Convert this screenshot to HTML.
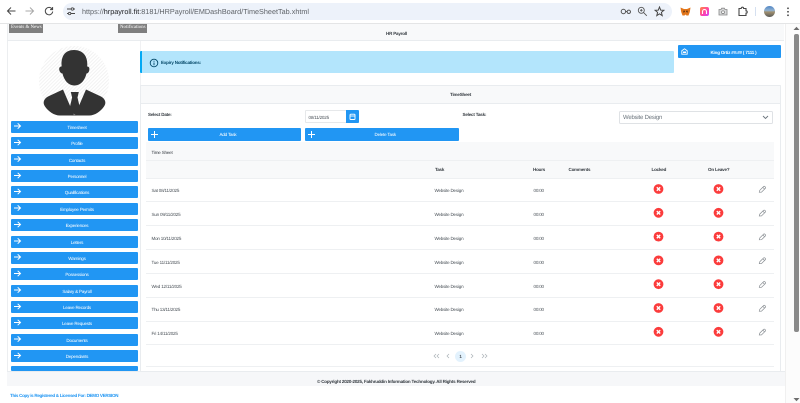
<!DOCTYPE html>
<html><head><meta charset="utf-8"><title>TimeSheet</title>
<style>
html,body{margin:0;padding:0;width:800px;height:403px;overflow:hidden;background:#fff;font-family:"Liberation Sans",sans-serif;text-rendering:geometricPrecision}
div,span,svg{position:absolute}
.t{white-space:nowrap;font-size:4.5px;letter-spacing:-.18px;line-height:6px;color:#495057}
.b{font-weight:bold}
.btn{background:#2196f3;border-radius:1px;color:#fff;font-size:4.5px;letter-spacing:-.18px;line-height:13px;text-align:center;white-space:nowrap}
.s{left:11px;width:127px;height:12px;padding-left:0;text-indent:5px}
.line{left:146px;width:628px;height:1px;background:#eef0f2}
.c{text-align:center}
</style></head><body>
<svg width="0" height="0" style="position:absolute"><defs>
<g id="ar"><path d="M0 3.5H6.500M3.700 .8L6.500 3.500L3.700 6.200" fill="none" stroke="#fff" stroke-width="1"/></g>
<g id="pl"><path d="M0 3.5H7M3.5 0V7" fill="none" stroke="#fff" stroke-width="1"/></g>
<g id="x"><circle cx="5" cy="5" r="4.9" fill="#fb3c3c"/><path d="M3.3 3.3L6.7 6.7M6.7 3.3L3.3 6.7" stroke="#fff" stroke-width="1.4"/></g>
<g id="pn"><path d="M.8 6.7L1.3 4.8L5 1.1C5.5.7 6 .7 6.4 1.1L6.8 1.5C7.2 2 7.2 2.4 6.8 2.9L3 6.6ZM4.3 1.8L6.1 3.6" fill="none" stroke="#8a8f94" stroke-width=".7"/></g>
</defs></svg>

<!-- browser toolbar -->
<div style="left:0;top:0;width:800px;height:23px;background:#fff"></div>
<div style="left:0;top:23px;width:800px;height:1px;background:#e4e5e6"></div>
<svg style="left:6px;top:6px" width="10" height="10"><path d="M9.5 5H1.5M5 1.5L1.5 5L5 8.5" fill="none" stroke="#474747" stroke-width="1"/></svg>
<svg style="left:25px;top:6px" width="10" height="10"><path d="M.5 5H8.5M5 1.5L8.5 5L5 8.5" fill="none" stroke="#a8a8a8" stroke-width="1"/></svg>
<svg style="left:44px;top:6px" width="10" height="10"><path d="M8.2 3.2A3.7 3.7 0 1 0 8.7 5.5M8.6 1V3.6H6" fill="none" stroke="#474747" stroke-width="1"/></svg>
<div style="left:63px;top:3px;width:609px;height:17px;border-radius:9px;background:#edf2fa"></div>
<svg style="left:66px;top:6px" width="10" height="11"><path d="M1 3H5M7.8 3H9M1 7.5H2.2M5 7.5H9" stroke="#474747" stroke-width=".9"/><circle cx="6.4" cy="3" r="1.2" fill="none" stroke="#474747" stroke-width=".8"/><circle cx="3.6" cy="7.5" r="1.2" fill="none" stroke="#474747" stroke-width=".8"/></svg>
<div class="t" style="left:82px;top:7px;font-size:7.25px;letter-spacing:0;line-height:9px;color:#5f6368">https://<span style="position:static;color:#202124">hrpayroll.fit</span>:8181/HRPayroll/EMDashBoard/TimeSheetTab.xhtml</div>
<svg style="left:620px;top:6px" width="12" height="10"><circle cx="3.4" cy="5.5" r="2.2" fill="none" stroke="#555" stroke-width="1"/><circle cx="8.8" cy="5.8" r="1.7" fill="none" stroke="#555" stroke-width="1"/><path d="M5.5 5.5H7" stroke="#555"/></svg>
<svg style="left:637px;top:6px" width="11" height="11"><circle cx="4.3" cy="4.3" r="3" fill="none" stroke="#555" stroke-width=".9"/><path d="M6.6 6.6L9.8 9.8M3 4.3H5.6M4.3 3V5.6" stroke="#555" stroke-width=".9"/></svg>
<svg style="left:654px;top:6px" width="11" height="11"><path d="M5.5 1L6.7 4.1L9.9 4.3L7.4 6.4L8.2 9.6L5.5 7.8L2.8 9.6L3.6 6.4L1.1 4.3L4.3 4.1Z" fill="none" stroke="#474747" stroke-width="1"/></svg>
<svg style="left:680px;top:7px" width="11" height="9"><path d="M.5.5L4 2H7L10.5.5L9.8 5L8.5 8.5H6.5L5.5 7.5L4.5 8.5H2.5L1.2 5Z" fill="#e2761b"/><path d="M4 3L3 5.5L5 5ZM7 3L8 5.5L6 5Z" fill="#4a2a10"/></svg>
<div style="left:699.5px;top:7px;width:9px;height:9px;border-radius:2px;background:linear-gradient(135deg,#ff8a3c,#ff3fb0 60%,#c84dff)"></div>
<svg style="left:700.5px;top:8px" width="7" height="7"><path d="M1.5 6V3.5A2 2 0 0 1 5.5 3.5V6" fill="none" stroke="#fff" stroke-width="1.1"/></svg>
<svg style="left:718px;top:7px" width="10" height="9"><path d="M1 2.5H3L3.7 1.2H6.3L7 2.5H9V8H1Z" fill="#d9dadb" stroke="#888" stroke-width=".8"/><circle cx="5" cy="5.2" r="1.4" fill="#fff" stroke="#777" stroke-width=".7"/></svg>
<svg style="left:737px;top:6px" width="11" height="11"><path d="M2 2.5H4.2C4.2 .8 6.6 .8 6.6 2.5H9V4.8C10.6 4.8 10.6 7.2 9 7.2V9.5H2Z" fill="none" stroke="#474747" stroke-width="1.1"/></svg>
<div style="left:755px;top:7px;width:1px;height:9px;background:#d5e0f0"></div>
<div style="left:764px;top:6px;width:11px;height:11px;border-radius:50%;background:linear-gradient(#4f86c6 0,#8fb0d0 40%,#a09070 55%,#5a5a58 100%)"></div>
<svg style="left:786px;top:7px" width="4" height="10"><circle cx="2" cy="1.3" r=".9" fill="#474747"/><circle cx="2" cy="4.8" r=".9" fill="#474747"/><circle cx="2" cy="8.3" r=".9" fill="#474747"/></svg>

<!-- scrollbar -->
<div style="left:785px;top:24px;width:15px;height:379px;background:#fcfcfc;border-left:1px solid #f0f0f0;box-sizing:border-box"></div>
<div style="left:794px;top:34px;width:5px;height:298px;background:#8a8a8a;border-radius:2px"></div>
<svg style="left:793px;top:26px" width="7" height="5"><path d="M3.5 .8L6.5 4H.5Z" fill="#6d6d6d"/></svg>
<svg style="left:793px;top:397px" width="7" height="5"><path d="M3.5 4.2L6.5 1H.5Z" fill="#6d6d6d"/></svg>

<!-- page frame -->
<div style="left:7px;top:24px;width:777px;height:17px;background:#f8f9fa;border-bottom:1px solid #e9ecef;border-left:1px solid #eceef0;box-sizing:border-box"></div>
<div style="left:7px;top:41px;width:1px;height:330px;background:#eceef0"></div>
<div style="left:140px;top:41px;width:1px;height:330px;background:#f0f1f3"></div>
<div style="left:9px;top:24px;width:34px;height:9px;background:#7f7f7f;color:#fff;font:4.9px/8.5px 'Liberation Serif',serif;text-indent:2px;white-space:nowrap">Events &amp; News</div>
<div style="left:118px;top:24px;width:29px;height:9px;background:#7f7f7f;color:#fff;font:4.9px/8.5px 'Liberation Serif',serif;text-indent:2px;white-space:nowrap">Notifications</div>
<div class="t b" style="left:386px;top:31px;color:#343a40">HR Payroll</div>

<!-- avatar -->
<svg style="left:38px;top:46px" width="72" height="72" viewBox="38 46 72 72">
<defs><pattern id="h" width="2.5" height="2.5" patternUnits="userSpaceOnUse" patternTransform="rotate(-45)"><rect width="2.5" height="2.5" fill="#fff"/><rect width="2.5" height="1" fill="#f2f2f2"/></pattern></defs>
<circle cx="74" cy="81" r="35" fill="url(#h)"/>
<path d="M74 50C65 50 61.500 56 61.500 64C61.500 65.500 61.800 66 61.500 66.500C59.500 66.500 59 68 59.300 70C59.700 72 61 73.500 62.500 73.500C63.500 78 67 85.500 74.500 85.500C82 85.500 85.500 78 86.500 73.500C88 73.500 89 72 89.300 70C89.700 68 89 66.500 87.300 66.500C87 66 87.300 65.500 87.300 64C87.300 56 83 50 74 50Z" fill="#333"/>
<path d="M63 89.500L48 96.500C43.500 99 42.500 103 45 106.500C48.500 111.500 54 115.500 60 115.500H89C95 115.500 100.500 111.500 104 106.500C106.500 103 105.500 99 101 96.500L86 89.500L75 115H74Z" fill="#333"/>
<path d="M70.800 92H78.800L77.500 97.500L80.300 109.500L74.800 115L69.300 109.500L72.100 97.500Z" fill="#333"/>
</svg>

<!-- sidebar -->
<div class="btn s" style="top:120.5px">Timesheet</div>
<div class="btn s" style="top:137px">Profile</div>
<div class="btn s" style="top:153.5px">Contacts</div>
<div class="btn s" style="top:170px">Personnel</div>
<div class="btn s" style="top:186px">Qualifications</div>
<div class="btn s" style="top:202.5px">Employee Permits</div>
<div class="btn s" style="top:219px">Experiences</div>
<div class="btn s" style="top:235.500px">Letters</div>
<div class="btn s" style="top:251.500px">Warnings</div>
<div class="btn s" style="top:268px">Possessions</div>
<div class="btn s" style="top:284.500px">Salary &amp; Payroll</div>
<div class="btn s" style="top:301px">Leave Records</div>
<div class="btn s" style="top:317px">Leave Requests</div>
<div class="btn s" style="top:333.500px">Documents</div>
<div class="btn s" style="top:350px">Dependants</div>
<div class="btn s" style="top:366px;height:5px;line-height:5px"></div>
<svg style="left:13px;top:120px" width="9" height="250" viewBox="0 0 9 250">
<use href="#ar" x="1" y="2.500"/><use href="#ar" x="1" y="19"/><use href="#ar" x="1" y="35.500"/><use href="#ar" x="1" y="52"/><use href="#ar" x="1" y="68"/><use href="#ar" x="1" y="84.500"/><use href="#ar" x="1" y="101"/><use href="#ar" x="1" y="117.500"/><use href="#ar" x="1" y="133.500"/><use href="#ar" x="1" y="150"/><use href="#ar" x="1" y="166.500"/><use href="#ar" x="1" y="183"/><use href="#ar" x="1" y="199"/><use href="#ar" x="1" y="215.500"/><use href="#ar" x="1" y="232"/>
</svg>

<!-- alert -->
<div style="left:139.5px;top:51px;width:534px;height:22px;background:#b3e5fc;border-left:2px solid #03a9f4;box-sizing:border-box;border-radius:1px"></div>
<svg style="left:149px;top:58px" width="10" height="10"><circle cx="5" cy="5" r="3.8" fill="none" stroke="#044868" stroke-width=".9"/><path d="M5 4.500V7.300M5 2.700V3.700" stroke="#044868" stroke-width=".9"/></svg>
<div class="t b" style="left:161px;top:59.500px;color:#044868">Expiry Notifications:</div>

<!-- user button -->
<div class="btn" style="left:678px;top:45px;width:103px;height:12.500px;text-indent:8px;font-weight:bold;line-height:15px">King Ortiz ##:## ( 7111 )</div>
<svg style="left:680.500px;top:48px" width="7" height="7"><path d="M.8 2.700L3.500 .8L6.200 2.700V6.200H.8Z" fill="none" stroke="#fff" stroke-width=".9"/><path d="M2 3.500H5V5H2Z" fill="#fff"/></svg>

<!-- card -->
<div style="left:140px;top:85px;width:641px;height:286px;border:1px solid #e9ecef;border-bottom:0;box-sizing:border-box;border-radius:1px 1px 0 0"></div>
<div style="left:141px;top:86px;width:639px;height:17px;background:#f8f9fa;border-bottom:1px solid #e9ecef"></div>
<div class="t b" style="left:450px;top:92px;color:#343a40">TimeSheet</div>

<div class="t b" style="left:148px;top:111.500px;color:#343a40">Select Date:</div>
<div style="left:305px;top:110px;width:42px;height:13px;border:1px solid #e6e8ea;box-sizing:border-box;border-radius:1px 0 0 1px"></div>
<div class="t" style="left:308.500px;top:114.500px">08/11/2025</div>
<div style="left:346px;top:110px;width:13px;height:13px;background:#2196f3;border-radius:0 1px 1px 0"></div>
<svg style="left:349px;top:113px" width="7" height="7"><rect x="1" y="1.200" width="5" height="5.300" rx=".8" fill="none" stroke="#fff" stroke-width=".9"/><path d="M1 3H6" stroke="#fff" stroke-width=".9"/></svg>
<div class="t b" style="left:462.500px;top:111.500px;color:#343a40">Select Task:</div>
<div style="left:619px;top:110.500px;width:153.500px;height:13px;border:1px solid #dfe2e5;box-sizing:border-box;border-radius:1.500px;background:#fff"></div>
<div class="t" style="left:623px;top:113.500px;font-size:6px;letter-spacing:-.2px;line-height:8px;color:#6c757d">Website Design</div>
<svg style="left:762px;top:115px" width="7" height="5"><path d="M1 1L3.500 3.500L6 1" fill="none" stroke="#6c757d" stroke-width=".9"/></svg>

<div class="btn" style="left:148px;top:128px;width:153px;height:12.500px;text-indent:7px">Add Task</div>
<div class="btn" style="left:305px;top:128px;width:153.500px;height:12.500px;text-indent:7px">Delete Task</div>
<svg style="left:151px;top:130.500px" width="8" height="8"><use href="#pl"/></svg>
<svg style="left:308px;top:130.500px" width="8" height="8"><use href="#pl"/></svg>

<!-- table -->
<div style="left:146px;top:142px;width:628px;height:36px;background:#f8f9fa"></div>
<div class="line" style="top:159.500px"></div>
<div class="line" style="top:177.500px"></div>
<div class="t" style="left:151.500px;top:149.500px;color:#343a40">Time Sheet</div>
<div class="t b" style="left:435px;top:167px;color:#343a40">Task</div>
<div class="t b" style="left:533px;top:167px;color:#343a40">Hours</div>
<div class="t b" style="left:568.500px;top:167px;color:#343a40">Comments</div>
<div class="t b" style="left:651.500px;top:167px;color:#343a40">Locked</div>
<div class="t b" style="left:708px;top:167px;color:#343a40">On Leave?</div>

<div class="t" style="left:151.500px;top:188px">Sat 08/11/2025</div>
<div class="t" style="left:151.500px;top:212px">Sun 09/11/2025</div>
<div class="t" style="left:151.500px;top:236px">Mon 10/11/2025</div>
<div class="t" style="left:151.500px;top:259.500px">Tue 11/11/2025</div>
<div class="t" style="left:151.500px;top:283.500px">Wed 12/11/2025</div>
<div class="t" style="left:151.500px;top:307px">Thu 13/11/2025</div>
<div class="t" style="left:151.500px;top:331px">Fri 14/11/2025</div>

<div class="t" style="left:434.500px;top:188px">Website Design</div>
<div class="t" style="left:434.500px;top:212px">Website Design</div>
<div class="t" style="left:434.500px;top:236px">Website Design</div>
<div class="t" style="left:434.500px;top:259.500px">Website Design</div>
<div class="t" style="left:434.500px;top:283.500px">Website Design</div>
<div class="t" style="left:434.500px;top:307px">Website Design</div>
<div class="t" style="left:434.500px;top:331px">Website Design</div>

<div class="t" style="left:533.500px;top:188px">00:00</div>
<div class="t" style="left:533.500px;top:212px">00:00</div>
<div class="t" style="left:533.500px;top:236px">00:00</div>
<div class="t" style="left:533.500px;top:259.500px">00:00</div>
<div class="t" style="left:533.500px;top:283.500px">00:00</div>
<div class="t" style="left:533.500px;top:307px">00:00</div>
<div class="t" style="left:533.500px;top:331px">00:00</div>

<div class="line" style="top:201.300px"></div>
<div class="line" style="top:225.200px"></div>
<div class="line" style="top:249px"></div>
<div class="line" style="top:272.800px"></div>
<div class="line" style="top:296.600px"></div>
<div class="line" style="top:320.500px"></div>
<div class="line" style="top:344px"></div>
<div class="line" style="top:366px"></div>

<svg style="left:650px;top:180px" width="125" height="160" viewBox="0 0 125 160">
<use href="#x" x="3.500" y="4"/><use href="#x" x="63.500" y="4"/><use href="#pn" x="108.500" y="5.500"/>
<use href="#x" x="3.500" y="27.800"/><use href="#x" x="63.500" y="27.800"/><use href="#pn" x="108.500" y="29.300"/>
<use href="#x" x="3.500" y="51.600"/><use href="#x" x="63.500" y="51.600"/><use href="#pn" x="108.500" y="53.100"/>
<use href="#x" x="3.500" y="75.400"/><use href="#x" x="63.500" y="75.400"/><use href="#pn" x="108.500" y="76.900"/>
<use href="#x" x="3.500" y="99.200"/><use href="#x" x="63.500" y="99.200"/><use href="#pn" x="108.500" y="100.700"/>
<use href="#x" x="3.500" y="123"/><use href="#x" x="63.500" y="123"/><use href="#pn" x="108.500" y="124.500"/>
<use href="#x" x="3.500" y="146.800"/><use href="#x" x="63.500" y="146.800"/><use href="#pn" x="108.500" y="148.300"/>
</svg>

<!-- pagination -->
<svg style="left:432px;top:352px" width="58" height="8"><path d="M4 2L2 4L4 6M7 2L5 4L7 6M17 2L15 4L17 6M39 2L41 4L39 6M50 2L52 4L50 6M53 2L55 4L53 6" fill="none" stroke="#a9b0b6" stroke-width=".7"/></svg>
<div style="left:455px;top:351px;width:11px;height:11px;border-radius:50%;background:#e3f2fd"></div>
<div class="t b c" style="left:455px;top:353.500px;width:11px;color:#495057">1</div>

<!-- footer -->
<div style="left:7px;top:371px;width:778px;height:15px;background:#f6f7f9;border-top:1px solid #e9ecef;box-sizing:border-box"></div>
<div class="t b" style="left:317px;top:378.500px;color:#343a40">© Copyright 2020-2025, Fakhruddin Information Technology. All Rights Reserved</div>
<div class="t b" style="left:10px;top:393px;color:#2196f3;letter-spacing:-.28px">This Copy is Registered &amp; Licensed For: DEMO VERSION</div>
</body></html>
